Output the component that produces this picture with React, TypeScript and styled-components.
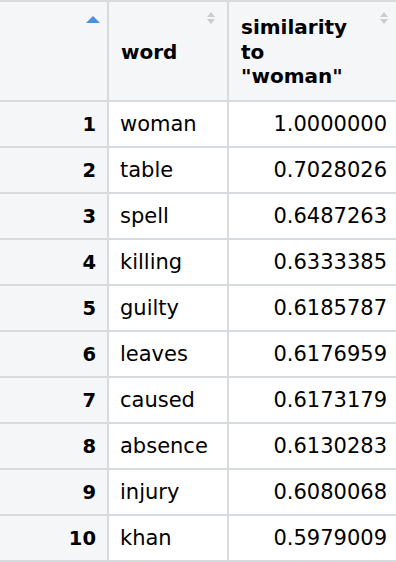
import React from "react";
import styled, { createGlobalStyle } from "styled-components";

const rows: [string, string][] = [
  ["woman", "1.0000000"],
  ["table", "0.7028026"],
  ["spell", "0.6487263"],
  ["killing", "0.6333385"],
  ["guilty", "0.6185787"],
  ["leaves", "0.6176959"],
  ["caused", "0.6173179"],
  ["absence", "0.6130283"],
  ["injury", "0.6080068"],
  ["khan", "0.5979009"],
];

const App = () => {
  return (
    <>
      <GlobalStyle />
      <Table>
        <HeaderCell>
          <SortAsc $right={7} />
        </HeaderCell>
        <HeaderCell>
          <span>word</span>
          <SortBoth $right={12} />
        </HeaderCell>
        <HeaderCell>
          <HeaderLabel>similarity to "woman"</HeaderLabel>
          <SortBoth $right={8} />
        </HeaderCell>

        {rows.map(([word, value], i) => (
          <React.Fragment key={word}>
            <IndexCell>{i + 1}</IndexCell>
            <Cell>{word}</Cell>
            <Cell $numeric>{value}</Cell>
          </React.Fragment>
        ))}
      </Table>
    </>
  );
};

export default App;

const SortBoth = ({ $right }: { $right: number }) => (
  <SortIcon $right={$right} width="8" height="12" viewBox="0 0 8 12">
    <path d="M0 5 L4 0 L8 5 Z" fill="#c9ccd0" />
    <path d="M0 7 L4 12 L8 7 Z" fill="#c9ccd0" />
  </SortIcon>
);

const GlobalStyle = createGlobalStyle`
  html, body {
    margin: 0;
    padding: 0;
    background: #fff;
    overflow: hidden;
  }
  * {
    box-sizing: border-box;
  }
`;

const Table = styled.div`
  display: grid;
  grid-template-columns: 109px 120px 169px;
  width: 398px;
  border-top: 2px solid #d8dbde;
  font-family: "DejaVu Sans", "Liberation Sans", sans-serif;
  color: #000;
`;

const BaseCell = styled.div`
  display: flex;
  align-items: center;
  border-right: 2px solid #d8dbde;
  border-bottom: 2px solid #d8dbde;
  padding: 0 11px;
`;

const HeaderCell = styled(BaseCell)`
  position: relative;
  height: 100px;
  background: #f5f6f8;
  font-weight: bold;
  font-size: 20px;
  line-height: 24.5px;
  padding: 2px 12px 0;
`;

const HeaderLabel = styled.span`
  max-width: 112px;
`;

const IndexCell = styled(BaseCell)`
  height: 46px;
  justify-content: flex-end;
  background: #f4f6f8;
  font-weight: bold;
  font-size: 19.5px;
`;

const Cell = styled(BaseCell)<{ $numeric?: boolean }>`
  height: 46px;
  justify-content: ${(p) => (p.$numeric ? "flex-end" : "flex-start")};
  padding-right: ${(p) => (p.$numeric ? "9px" : "11px")};
  background: #fff;
  font-size: 21px;
`;

const SortIcon = styled.svg<{ $right: number }>`
  position: absolute;
  top: 10px;
  right: ${(p) => p.$right}px;
`;

const SortAsc = styled.span<{ $right: number }>`
  position: absolute;
  top: 14px;
  right: ${(p) => p.$right}px;
  width: 0;
  height: 0;
  border-left: 7px solid transparent;
  border-right: 7px solid transparent;
  border-bottom: 7px solid #4a90e2;
`;
